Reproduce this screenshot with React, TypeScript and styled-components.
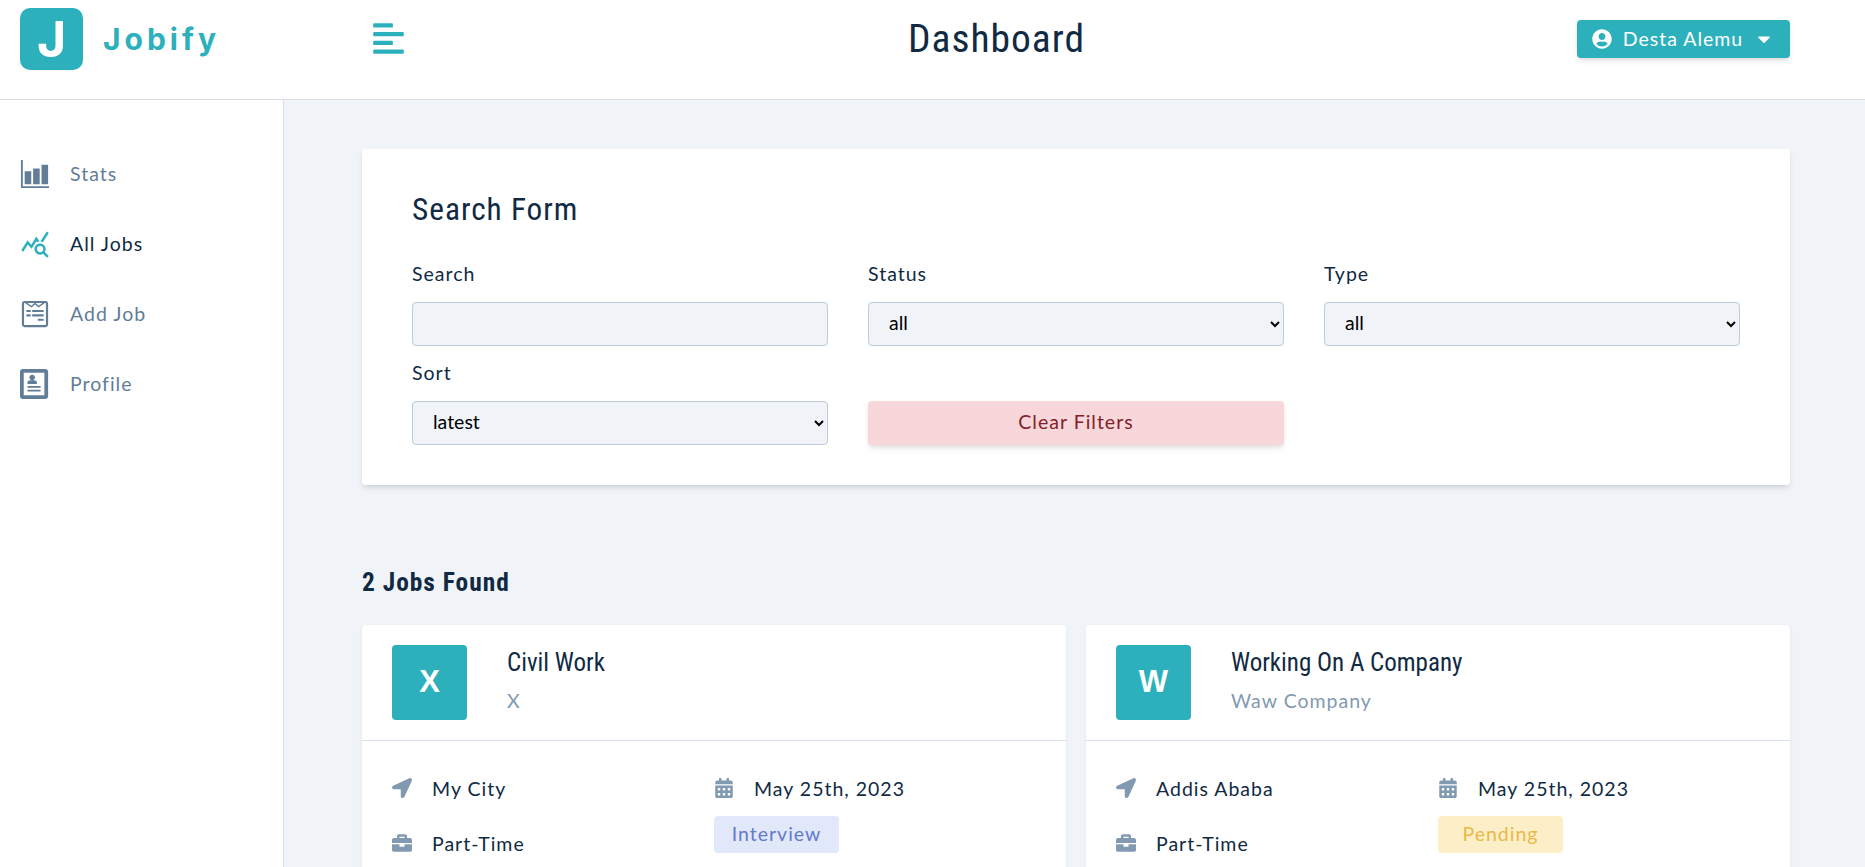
import React from 'react';
import styled, { createGlobalStyle } from 'styled-components';
import { FaAlignLeft, FaBriefcase, FaCalendarAlt, FaCaretDown, FaLocationArrow, FaUserCircle, FaWpforms } from 'react-icons/fa';
import { IoBarChartSharp } from 'react-icons/io5';
import { MdQueryStats } from 'react-icons/md';
import { ImProfile } from 'react-icons/im';

const teal = '#2cb1bc';
const bodyFont = `'Lato', 'Open Sans', sans-serif`;
const headingFont = `'Roboto Condensed', 'Liberation Sans Narrow', 'Roboto', sans-serif`;

const GlobalStyle = createGlobalStyle`
  html, body {
    margin: 0;
    height: 100%;
    overflow: hidden;
  }
  body {
    background: #f0f4f8;
    color: #102a43;
    font-family: ${bodyFont};
  }
  * { box-sizing: border-box; }
`;

const Topbar = styled.header`
  height: 100px;
  display: flex;
  align-items: center;
  padding: 0 75px 21px 20px;
  background: #fff;
  border-bottom: 1px solid #d9dee5;
`;

const Brand = styled.div`
  width: 351px;
  display: flex;
  align-items: center;
  gap: 20px;
`;

const LogoMark = styled.div`
  width: 63px;
  height: 62px;
  display: flex;
  align-items: center;
  justify-content: center;
  border-radius: 10px;
  background: ${teal};
  color: #fff;
  font: 700 50px 'Inter', sans-serif;
`;

const LogoText = styled.span`
  color: ${teal};
  font: 700 30px 'Inter', sans-serif;
  letter-spacing: 4px;
`;

const TopbarInner = styled.div`
  flex: 1;
  display: flex;
  align-items: center;
  justify-content: space-between;
`;

const MenuButton = styled.button`
  padding: 0;
  border: 0;
  background: none;
  color: ${teal};
  display: flex;
  font-size: 35px;
`;

const PageTitle = styled.h3`
  margin: 0 0 0 10px;
  font-family: ${headingFont};
  font-size: 39.5px;
  font-weight: 400;
  letter-spacing: 1px;
  line-height: 1.2;
`;

const UserButton = styled.button`
  width: 213px;
  height: 38px;
  display: flex;
  align-items: center;
  justify-content: space-between;
  padding: 0 16px 0 15px;
  border: 0;
  border-radius: 4px;
  background: ${teal};
  color: #fff;
  font-family: ${bodyFont};
  font-size: 19.5px;
  letter-spacing: 1px;
  box-shadow: 0 4px 6px -1px rgba(0, 0, 0, 0.1), 0 2px 4px -1px rgba(0, 0, 0, 0.06);
  svg {
    font-size: 20px;
  }
`;

const Shell = styled.div`
  display: grid;
  grid-template-columns: 284px 1fr;
  height: calc(100vh - 100px);
`;

const Sidebar = styled.aside`
  background: #fff;
  border-right: 1px solid #d9dee5;
  padding-top: 54px;
  display: flex;
  flex-direction: column;
  gap: 30px;
`;

const NavItem = styled.a<{ $active?: boolean }>`
  height: 40px;
  display: flex;
  align-items: center;
  padding-left: 20px;
  gap: 20px;
  color: ${(p) => (p.$active ? '#102a43' : '#627d98')};
  font-size: 19.5px;
  letter-spacing: 1px;
  svg {
    font-size: 30px;
    color: ${(p) => (p.$active ? teal : '#627d98')};
  }
`;

const NavLabel = styled.span`
  padding-bottom: 2px;
`;

const Main = styled.main`
  padding: 49px 75px 0 78px;
  overflow: hidden;
`;

const FormCard = styled.section`
  padding: 40px 50px;
  background: #fff;
  border-radius: 4px;
  box-shadow: 0 4px 6px -1px rgba(0, 0, 0, 0.1), 0 2px 4px -1px rgba(0, 0, 0, 0.06);
`;

const FormTitle = styled.h4`
  margin: 0 0 31px;
  font-family: ${headingFont};
  font-size: 31.3px;
  font-weight: 400;
  line-height: 42px;
  letter-spacing: 1px;
`;

const FormGrid = styled.div`
  display: grid;
  grid-template-columns: repeat(3, 1fr);
  column-gap: 40px;
  row-gap: 15px;
`;

const Field = styled.div`
  display: flex;
  flex-direction: column;
  justify-content: flex-end;
`;

const Label = styled.label`
  margin-bottom: 16px;
  font-size: 19.5px;
  line-height: 24px;
  letter-spacing: 1px;
`;

const TextInput = styled.input`
  height: 44px;
  padding: 6px 12px;
  background: #f0f4f8;
  border: 1px solid #bcccdc;
  border-radius: 4px;
`;

const SelectInput = styled.select`
  height: 44px;
  padding: 4px 16px 8px;
  background: #f0f4f8;
  border: 1px solid #bcccdc;
  border-radius: 4px;
  font-family: ${bodyFont};
  font-size: 19.5px;
  color: #000;
`;

const ClearButton = styled.button`
  height: 44px;
  padding: 0 0 4px;
  border: 0;
  border-radius: 4px;
  background: #f8d7da;
  color: #842029;
  font-family: ${bodyFont};
  font-size: 19.5px;
  letter-spacing: 1px;
  box-shadow: 0 4px 6px -1px rgba(0, 0, 0, 0.1), 0 2px 4px -1px rgba(0, 0, 0, 0.06);
`;

const JobsHeading = styled.h5`
  margin: 82px 0 28px;
  font-family: ${headingFont};
  font-size: 25.4px;
  font-weight: 700;
  line-height: 30px;
  letter-spacing: 1px;
`;

const JobsGrid = styled.div`
  display: grid;
  grid-template-columns: 1fr 1fr;
  gap: 20px;
`;

const JobCard = styled.article`
  background: #fff;
  border-radius: 4px;
  box-shadow: 0 2px 4px -1px rgba(0, 0, 0, 0.1);
`;

const JobHeader = styled.div`
  display: flex;
  gap: 40px;
  padding: 20px 30px 20px;
  border-bottom: 1px solid #d9e2ec;
`;

const Avatar = styled.div`
  width: 75px;
  height: 75px;
  padding-bottom: 2px;
  display: flex;
  align-items: center;
  justify-content: center;
  border-radius: 4px;
  background: ${teal};
  color: #fff;
  font: 700 31px 'Liberation Sans', sans-serif;
`;

const JobTitle = styled.h5`
  margin: 3px 0 0;
  font-family: ${headingFont};
  font-size: 25px;
  font-weight: 400;
  line-height: 30px;
`;

const Company = styled.p`
  margin: 8px 0 0;
  color: #829ab1;
  font-size: 19.5px;
  line-height: 30px;
  letter-spacing: 1px;
`;

const JobBody = styled.div`
  display: grid;
  grid-template-columns: 1fr 1fr;
  align-items: start;
  row-gap: 13px;
  padding: 32px 30px 30px;
`;

const Info = styled.div<{ $offset?: number }>`
  height: 30px;
  margin-top: ${(p) => p.$offset ?? 0}px;
  display: flex;
  align-items: center;
  gap: 20px;
  font-size: 19.5px;
  letter-spacing: 1px;
  svg {
    width: 20px;
    font-size: 20px;
    color: #829ab1;
  }
`;

const statusColors = {
  interview: { bg: '#e0e8f9', fg: '#647acb' },
  pending: { bg: '#fcefc7', fg: '#e9b949' },
};

const Status = styled.div<{ $status: keyof typeof statusColors }>`
  width: 125px;
  height: 37px;
  padding-bottom: 2px;
  display: flex;
  align-items: center;
  justify-content: center;
  border-radius: 4px;
  background: ${(p) => statusColors[p.$status].bg};
  color: ${(p) => statusColors[p.$status].fg};
  font-size: 19.5px;
  letter-spacing: 1px;
`;

const jobs = [
  { letter: 'X', title: 'Civil Work', company: 'X', place: 'My City', status: 'interview' as const },
  { letter: 'W', title: 'Working On A Company', company: 'Waw Company', place: 'Addis Ababa', status: 'pending' as const },
];

export default function App() {
  return (
    <>
      <GlobalStyle />
      <Topbar>
        <Brand>
          <LogoMark>J</LogoMark>
          <LogoText>Jobify</LogoText>
        </Brand>
        <TopbarInner>
          <MenuButton aria-label="toggle sidebar"><FaAlignLeft /></MenuButton>
          <PageTitle>Dashboard</PageTitle>
          <UserButton>
            <FaUserCircle />
            Desta Alemu
            <FaCaretDown />
          </UserButton>
        </TopbarInner>
      </Topbar>
      <Shell>
        <Sidebar>
          <NavItem><IoBarChartSharp /><NavLabel>Stats</NavLabel></NavItem>
          <NavItem $active><MdQueryStats /><NavLabel>All Jobs</NavLabel></NavItem>
          <NavItem><FaWpforms /><NavLabel>Add Job</NavLabel></NavItem>
          <NavItem><ImProfile /><NavLabel>Profile</NavLabel></NavItem>
        </Sidebar>
        <Main>
          <FormCard>
            <FormTitle>Search Form</FormTitle>
            <FormGrid>
              <Field>
                <Label>Search</Label>
                <TextInput type="text" />
              </Field>
              <Field>
                <Label>Status</Label>
                <SelectInput defaultValue="all"><option>all</option></SelectInput>
              </Field>
              <Field>
                <Label>Type</Label>
                <SelectInput defaultValue="all"><option>all</option></SelectInput>
              </Field>
              <Field>
                <Label>Sort</Label>
                <SelectInput defaultValue="latest"><option>latest</option></SelectInput>
              </Field>
              <Field>
                <ClearButton>Clear Filters</ClearButton>
              </Field>
            </FormGrid>
          </FormCard>
          <JobsHeading>2 Jobs Found</JobsHeading>
          <JobsGrid>
            {jobs.map((job) => (
              <JobCard key={job.title}>
                <JobHeader>
                  <Avatar>{job.letter}</Avatar>
                  <div>
                    <JobTitle>{job.title}</JobTitle>
                    <Company>{job.company}</Company>
                  </div>
                </JobHeader>
                <JobBody>
                  <Info><FaLocationArrow />{job.place}</Info>
                  <Info><FaCalendarAlt />May 25th, 2023</Info>
                  <Info $offset={12}><FaBriefcase />Part-Time</Info>
                  <Status $status={job.status}>{job.status === 'interview' ? 'Interview' : 'Pending'}</Status>
                </JobBody>
              </JobCard>
            ))}
          </JobsGrid>
        </Main>
      </Shell>
    </>
  );
}
